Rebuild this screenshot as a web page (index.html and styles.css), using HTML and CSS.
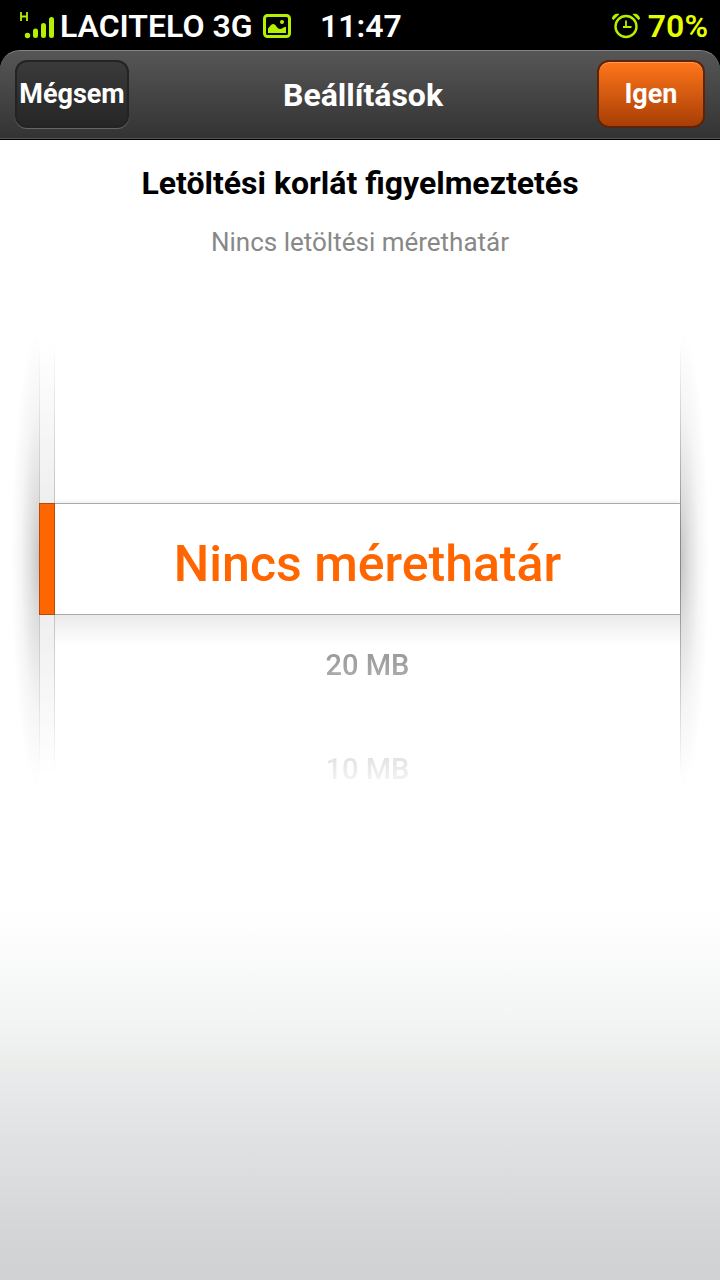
FILE: index.html
```html
<!DOCTYPE html>
<html lang="hu">
    <head>
        <title>Beállítások</title>
        <meta charset="utf-8">
        <meta name="viewport" content="width=device-width, initial-scale=1">
        <link rel="stylesheet" href="styles.css">
    </head>
    <body>
        <div class="statusbar">
            <div class="status-left">
                <svg class="signal" width="36" height="28" viewBox="0 0 36 28">
                    <path d="M1 0v9M7 0v9M1 4.500h6" fill="none" stroke="#b4f000" stroke-width="1.800"/>
                    <path d="M15.500 18v4.500M23.500 12.500v10M31.500 6.500v16" transform="translate(0 1)" fill="none" stroke="#b4f000" stroke-width="5" stroke-linecap="round"/>
                    <circle cx="7.500" cy="23.500" r="2.700" fill="#b4f000"/>
                </svg>
                <span>LACITELO 3G</span>
                <svg class="picture" width="28" height="24" viewBox="0 0 28 24">
                    <rect x="1.500" y="1.500" width="25" height="21" rx="3" fill="none" stroke="#b4f000" stroke-width="3"/>
                    <path d="M5 19v-4.500c2-2 3-4.500 5-4.500 3 0 4 5 7 5 2.500 0 3.500-2.500 6-2v6z" fill="#b4f000"/>
                    <circle cx="19" cy="8" r="2" fill="#b4f000"/>
                </svg>
            </div>
            <time>11:47</time>
            <div class="status-right">
                <svg class="alarm" width="28" height="26" viewBox="0 0 28 26">
                    <g fill="none" stroke="#b4f000">
                        <circle cx="14" cy="13.500" r="10.500" stroke-width="2.400"/>
                        <path d="M14 7.500v6.500h5.500M14 14h-3" stroke-width="1.800"/>
                    </g>
                    <path d="M0 6C0 2 4 0 7.500 1L1.500 7zM28 6c0-4-4-6-7.500-5l6 6z" fill="#b4f000"/>
                </svg>
                <span>70%</span>
            </div>
        </div>
        <div class="screen">
            <header>
                <button type="button" class="btn btn-cancel">Mégsem</button>
                <h1>Beállítások</h1>
                <button type="submit" form="limit" class="btn btn-ok">Igen</button>
            </header>
            <main>
                <h2>Letöltési korlát figyelmeztetés</h2>
                <p>Nincs letöltési mérethatár</p>
                <form id="limit" class="picker">
                    <div class="rail"><span class="marker"></span></div>
                    <div class="wheel" role="radiogroup" aria-label="Letöltési korlát">
                        <label class="option selected"><input type="radio" name="limit" value="0" checked>Nincs mérethatár</label>
                        <div class="rest">
                            <label class="option"><input type="radio" name="limit" value="20">20 MB</label>
                            <label class="option"><input type="radio" name="limit" value="10">10 MB</label>
                        </div>
                    </div>
                </form>
            </main>
        </div>
    </body>
</html>
```
FILE: styles.css
```css
*{
    box-sizing: border-box;
}
body{
    margin: 0;
    min-height: 100vh;
    display: flex;
    flex-direction: column;
    background-color: #000;
    font-family: Roboto, "Liberation Sans", sans-serif;
    cursor: default;
}
h1,h2,p{
    margin: 0;
}
svg{
    display: block;
}

/* status bar */
.statusbar{
    height: 50px;
    padding: 0 12px 0 20px;
    display: grid;
    grid-template-columns: 300px auto 1fr;
    align-items: center;
    color: #fff;
    font-size: 32px;
    font-weight: 600;
    line-height: 52px;
    white-space: nowrap;
}
.status-left,
.status-right{
    display: flex;
    align-items: center;
}
.status-left span{
    margin: 0 10px 0 4px;
}
.status-right{
    justify-content: flex-end;
    gap: 8px;
    color: #e6ff00;
}

/* title bar */
.screen{
    flex: 1;
    display: flex;
    flex-direction: column;
}
header{
    height: 90px;
    padding: 9px 15px;
    display: flex;
    justify-content: space-between;
    align-items: flex-start;
    border-top: 1px solid #858585;
    border-bottom: 1px solid #000;
    border-radius: 20px 20px 0 0;
    background-image: linear-gradient(#565656, #333);
    box-shadow: inset 0 -1px 0 #555;
    color: #fff;
}
h1{
    font-size: 32px;
    font-weight: 700;
    line-height: 70px;
}
.btn{
    height: 68px;
    padding: 0;
    border-radius: 12px;
    color: #fff;
    font-family: inherit;
    font-size: 27px;
    font-weight: 700;
}
.btn-cancel{
    width: 114px;
    border: 2px solid #232323;
    background-image: linear-gradient(#3a3a3a, #262626);
    box-shadow: 0 1px 0 #666;
}
.btn-ok{
    width: 108px;
    border: 2px solid #5c2408;
    background-image: linear-gradient(#ff761a, #a83e06);
    box-shadow: inset 0 1px 0 #ff9a58;
}

main{
    flex: 1;
    padding: 22px 39px 0;
    background-image: linear-gradient(#fff 0, #fff 770px, #f3f4f4 880px, #eaecea 930px, #e8e9eb 945px, #d3d4d6 1100px, #d1d2d4 1140px);
    text-align: center;
}
h2{
    color: #000;
    font-size: 32px;
    font-weight: 700;
    line-height: 42px;
}
p{
    margin-top: 20px;
    color: #888;
    font-size: 26px;
    line-height: 36px;
}

/* wheel picker */
.picker{
    position: relative;
    height: 480px;
    margin-top: 59px;
    display: flex;
}
.picker:before,
.picker:after{
    content: "";
    position: absolute;
    top: 10px;
    bottom: 10px;
    width: 28px;
}
.picker:before{
    right: 100%;
    background-image: radial-gradient(ellipse 100% 50% at right, rgba(0,0,0,0.22), rgba(0,0,0,0.12) 30%, rgba(0,0,0,0.04) 65%, transparent);
}
.picker:after{
    left: 100%;
    background-image: radial-gradient(ellipse 100% 50% at left, rgba(0,0,0,0.22), rgba(0,0,0,0.12) 30%, rgba(0,0,0,0.04) 65%, transparent);
}
.rail{
    width: 16px;
    display: flex;
    align-items: center;
    border: 1px solid;
    border-width: 0 1px;
    border-image: linear-gradient(transparent 5%, #bbb 45%, #bbb 55%, transparent 95%) 1;
    border-image-width: 0 1px;
    background-image: linear-gradient(transparent 5%, #eee 40%, #eee 60%, transparent 95%);
}
.marker{
    flex: none;
    width: 16px;
    height: 112px;
    margin: 0 -1px;
    border: 1px solid #b84a08;
    background-color: #ff6600;
}
.wheel{
    flex: 1;
    padding-top: 184px;
    overflow: hidden;
    border-right: 1px solid;
    border-image: linear-gradient(transparent 5%, #888 45%, #888 55%, transparent 95%) 1;
    border-image-width: 0 1px 0 0;
}
.option{
    display: block;
    height: 104px;
    color: #808080;
    font-size: 29px;
    font-weight: 500;
    line-height: 100px;
}
.option input{
    position: absolute;
    opacity: 0;
    pointer-events: none;
}
.selected{
    height: 112px;
    border: 1px solid #aaa;
    border-width: 1px 0;
    background-color: #fff;
    box-shadow: 0 -2px 4px #f0f0f0;
    color: #ff6600;
    font-size: 50px;
    line-height: 120px;
}
.rest{
    height: 184px;
    overflow: hidden;
    background: linear-gradient(#e9e9e9, transparent) no-repeat;
    background-size: 100% 30px;
    -webkit-mask-image: linear-gradient(#000, transparent);
    mask-image: linear-gradient(#000, transparent);
}
```
